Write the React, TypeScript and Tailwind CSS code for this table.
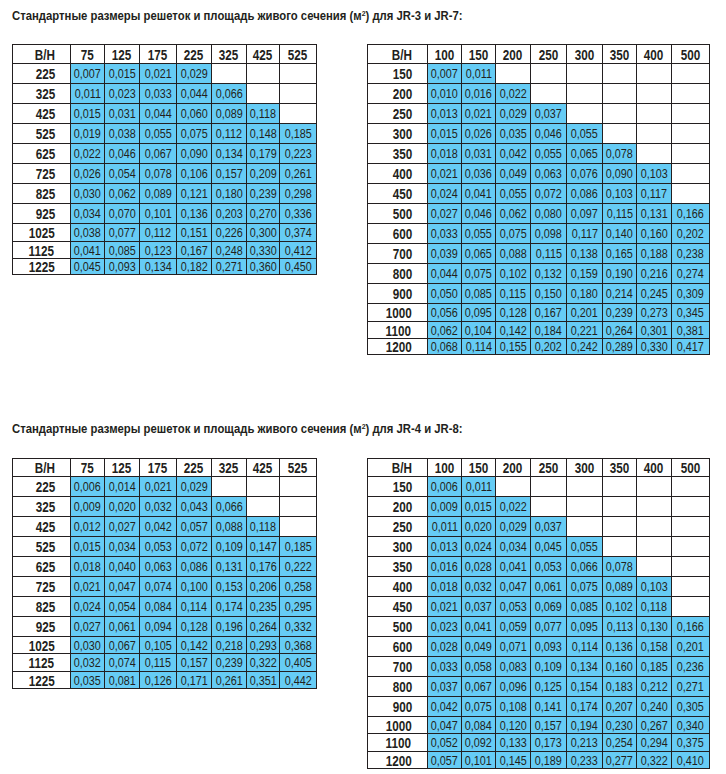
import React from "react";

type Row = [string, string[]];

const wA = ["w-[58px]", "w-[34px]", "w-[35px]", "w-[37px]", "w-[35px]", "w-[35px]", "w-[33px]", "w-[37px]"];
const wB = ["w-[60px]", "w-[34px]", "w-[34px]", "w-[35px]", "w-[36px]", "w-[36px]", "w-[34px]", "w-[35px]", "w-[38px]"];

const colsA = ["75", "125", "175", "225", "325", "425", "525"];
const colsB = ["100", "150", "200", "250", "300", "350", "400", "500"];

const s = (t: string) => t.split(" ");

const a1: Row[] = [
  ["225", s("0,007 0,015 0,021 0,029")],
  ["325", s("0,011 0,023 0,033 0,044 0,066")],
  ["425", s("0,015 0,031 0,044 0,060 0,089 0,118")],
  ["525", s("0,019 0,038 0,055 0,075 0,112 0,148 0,185")],
  ["625", s("0,022 0,046 0,067 0,090 0,134 0,179 0,223")],
  ["725", s("0,026 0,054 0,078 0,106 0,157 0,209 0,261")],
  ["825", s("0,030 0,062 0,089 0,121 0,180 0,239 0,298")],
  ["925", s("0,034 0,070 0,101 0,136 0,203 0,270 0,336")],
  ["1025", s("0,038 0,077 0,112 0,151 0,226 0,300 0,374")],
  ["1125", s("0,041 0,085 0,123 0,167 0,248 0,330 0,412")],
  ["1225", s("0,045 0,093 0,134 0,182 0,271 0,360 0,450")],
];

const b1: Row[] = [
  ["150", s("0,007 0,011")],
  ["200", s("0,010 0,016 0,022")],
  ["250", s("0,013 0,021 0,029 0,037")],
  ["300", s("0,015 0,026 0,035 0,046 0,055")],
  ["350", s("0,018 0,031 0,042 0,055 0,065 0,078")],
  ["400", s("0,021 0,036 0,049 0,063 0,076 0,090 0,103")],
  ["450", s("0,024 0,041 0,055 0,072 0,086 0,103 0,117")],
  ["500", s("0,027 0,046 0,062 0,080 0,097 0,115 0,131 0,166")],
  ["600", s("0,033 0,055 0,075 0,098 0,117 0,140 0,160 0,202")],
  ["700", s("0,039 0,065 0,088 0,115 0,138 0,165 0,188 0,238")],
  ["800", s("0,044 0,075 0,102 0,132 0,159 0,190 0,216 0,274")],
  ["900", s("0,050 0,085 0,115 0,150 0,180 0,214 0,245 0,309")],
  ["1000", s("0,056 0,095 0,128 0,167 0,201 0,239 0,273 0,345")],
  ["1100", s("0,062 0,104 0,142 0,184 0,221 0,264 0,301 0,381")],
  ["1200", s("0,068 0,114 0,155 0,202 0,242 0,289 0,330 0,417")],
];

const a2: Row[] = [
  ["225", s("0,006 0,014 0,021 0,029")],
  ["325", s("0,009 0,020 0,032 0,043 0,066")],
  ["425", s("0,012 0,027 0,042 0,057 0,088 0,118")],
  ["525", s("0,015 0,034 0,053 0,072 0,109 0,147 0,185")],
  ["625", s("0,018 0,040 0,063 0,086 0,131 0,176 0,222")],
  ["725", s("0,021 0,047 0,074 0,100 0,153 0,206 0,258")],
  ["825", s("0,024 0,054 0,084 0,114 0,174 0,235 0,295")],
  ["925", s("0,027 0,061 0,094 0,128 0,196 0,264 0,332")],
  ["1025", s("0,030 0,067 0,105 0,142 0,218 0,293 0,368")],
  ["1125", s("0,032 0,074 0,115 0,157 0,239 0,322 0,405")],
  ["1225", s("0,035 0,081 0,126 0,171 0,261 0,351 0,442")],
];

const b2: Row[] = [
  ["150", s("0,006 0,011")],
  ["200", s("0,009 0,015 0,022")],
  ["250", s("0,011 0,020 0,029 0,037")],
  ["300", s("0,013 0,024 0,034 0,045 0,055")],
  ["350", s("0,016 0,028 0,041 0,053 0,066 0,078")],
  ["400", s("0,018 0,032 0,047 0,061 0,075 0,089 0,103")],
  ["450", s("0,021 0,037 0,053 0,069 0,085 0,102 0,118")],
  ["500", s("0,023 0,041 0,059 0,077 0,095 0,113 0,130 0,166")],
  ["600", s("0,028 0,049 0,071 0,093 0,114 0,136 0,158 0,201")],
  ["700", s("0,033 0,058 0,083 0,109 0,134 0,160 0,185 0,236")],
  ["800", s("0,037 0,067 0,096 0,125 0,154 0,183 0,212 0,271")],
  ["900", s("0,042 0,075 0,108 0,141 0,174 0,207 0,240 0,305")],
  ["1000", s("0,047 0,084 0,120 0,157 0,194 0,230 0,267 0,340")],
  ["1100", s("0,052 0,092 0,133 0,173 0,213 0,254 0,294 0,375")],
  ["1200", s("0,057 0,101 0,145 0,189 0,233 0,277 0,322 0,410")],
];

const r20 = "h-[20px]";
const hA1 = [...Array(8).fill(r20), "h-[18px]", "h-[17px]", "h-[16px]"];
const hB1 = [...Array(12).fill(r20), "h-[18px]", "h-[17px]", "h-[16px]"];
const hA2 = [...Array(8).fill(r20), "h-[17px]", "h-[18px]", "h-[17px]"];
const hB2 = [...Array(12).fill(r20), "h-[17px]", "h-[18px]", "h-[17px]"];

function Bold({ children }: { children: React.ReactNode }) {
  return <span className="inline-block scale-x-[0.78] font-bold text-[15px]">{children}</span>;
}

function Table({
  cols,
  widths,
  rows,
  headH,
  heights,
}: {
  cols: string[];
  widths: string[];
  rows: Row[];
  headH: string;
  heights: string[];
}) {
  const cell = "border-r border-b border-[#231f20] flex items-center";
  return (
    <div className="border-l border-t border-[#231f20] text-[#231f20] shrink-0">
      <div className={`flex ${headH}`}>
        <div className={`${cell} ${widths[0]} justify-end pr-[12px]`}>
          <Bold>B/H</Bold>
        </div>
        {cols.map((c, i) => (
          <div key={c} className={`${cell} ${widths[i + 1]} justify-center`}>
            <Bold>{c}</Bold>
          </div>
        ))}
      </div>
      {rows.map(([label, vals], r) => (
        <div key={label} className={`flex ${heights[r]}`}>
          <div className={`${cell} ${widths[0]} justify-end pr-[12px]`}>
            <Bold>{label}</Bold>
          </div>
          {cols.map((c, i) => (
            <div
              key={c}
              className={`${cell} ${widths[i + 1]} justify-center ${vals[i] ? "bg-[#66ccf5]" : "bg-white"}`}
            >
              {vals[i] ? (
                <span className="inline-block scale-x-[0.83] text-[13px]">{vals[i]}</span>
              ) : null}
            </div>
          ))}
        </div>
      ))}
    </div>
  );
}

function Title({ a, b }: { a: string; b: string }) {
  return (
    <div className="h-[30px] flex items-center text-[#231f20]">
      <span className="inline-block origin-left scale-x-[0.87] font-bold text-[13px] whitespace-nowrap">
        Стандартные размеры решеток и площадь живого сечения (м<sup className="text-[8px]">2</sup>) для {a} и {b}:
      </span>
    </div>
  );
}

export default function App() {
  return (
    <div className="w-[726px] h-[774px] bg-white pl-3 leading-none font-['Liberation_Sans',Arial,sans-serif] overflow-hidden">
      <Title a="JR-3" b="JR-7" />
      <div className="flex items-start gap-[50px] mt-[14px]">
        <Table cols={colsA} widths={wA} rows={a1} headH="h-[19px]" heights={hA1} />
        <Table cols={colsB} widths={wB} rows={b1} headH="h-[19px]" heights={hB1} />
      </div>
      <div className="mt-[58px]">
        <Title a="JR-4" b="JR-8" />
      </div>
      <div className="flex items-start gap-[50px] mt-[15px]">
        <Table cols={colsA} widths={wA} rows={a2} headH="h-[18px]" heights={hA2} />
        <Table cols={colsB} widths={wB} rows={b2} headH="h-[18px]" heights={hB2} />
      </div>
    </div>
  );
}
